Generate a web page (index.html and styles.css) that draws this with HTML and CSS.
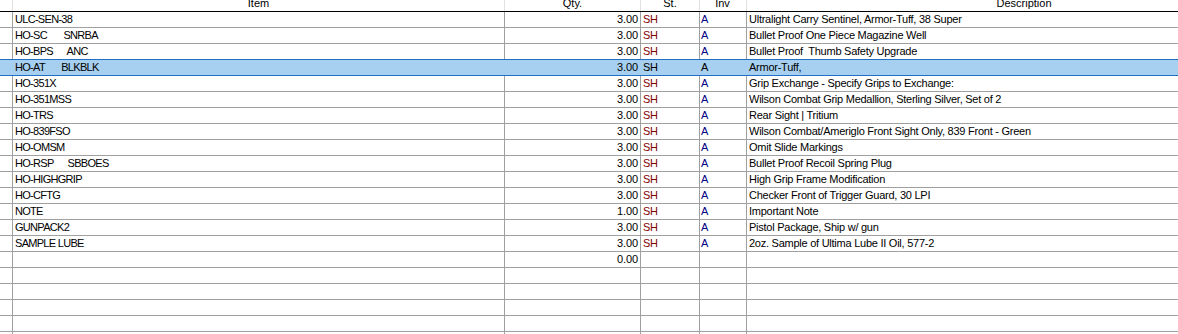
FILE: index.html
```html
<!DOCTYPE html>
<html>
<head>
<meta charset="utf-8">
<link rel="stylesheet" href="styles.css">
</head>
<body>
<div class="grid">
  <div class="row head"><div class="c c0"></div><div class="c c1">Item</div><div class="c c2">Qty.</div><div class="c c3">St.</div><div class="c c4">Inv</div><div class="c c5">Description</div></div>
  <div class="row"><div class="c c0"></div><div class="c c1">ULC-SEN-38</div><div class="c c2">3.00</div><div class="c c3 st">SH</div><div class="c c4 inv">A</div><div class="c c5">Ultralight Carry Sentinel, Armor-Tuff, 38 Super</div></div>
  <div class="row"><div class="c c0"></div><div class="c c1">HO-SC       SNRBA</div><div class="c c2">3.00</div><div class="c c3 st">SH</div><div class="c c4 inv">A</div><div class="c c5">Bullet Proof One Piece Magazine Well</div></div>
  <div class="row presel"><div class="c c0"></div><div class="c c1">HO-BPS      ANC</div><div class="c c2">3.00</div><div class="c c3 st">SH</div><div class="c c4 inv">A</div><div class="c c5">Bullet Proof  Thumb Safety Upgrade</div></div>
  <div class="row sel"><div class="c c0"></div><div class="c c1">HO-AT       BLKBLK</div><div class="c c2">3.00</div><div class="c c3 st">SH</div><div class="c c4 inv">A</div><div class="c c5">Armor-Tuff,</div></div>
  <div class="row"><div class="c c0"></div><div class="c c1">HO-351X</div><div class="c c2">3.00</div><div class="c c3 st">SH</div><div class="c c4 inv">A</div><div class="c c5">Grip Exchange - Specify Grips to Exchange:</div></div>
  <div class="row"><div class="c c0"></div><div class="c c1">HO-351MSS</div><div class="c c2">3.00</div><div class="c c3 st">SH</div><div class="c c4 inv">A</div><div class="c c5">Wilson Combat Grip Medallion, Sterling Silver, Set of 2</div></div>
  <div class="row"><div class="c c0"></div><div class="c c1">HO-TRS</div><div class="c c2">3.00</div><div class="c c3 st">SH</div><div class="c c4 inv">A</div><div class="c c5">Rear Sight | Tritium</div></div>
  <div class="row"><div class="c c0"></div><div class="c c1">HO-839FSO</div><div class="c c2">3.00</div><div class="c c3 st">SH</div><div class="c c4 inv">A</div><div class="c c5">Wilson Combat/Ameriglo Front Sight Only, 839 Front - Green</div></div>
  <div class="row"><div class="c c0"></div><div class="c c1">HO-OMSM</div><div class="c c2">3.00</div><div class="c c3 st">SH</div><div class="c c4 inv">A</div><div class="c c5">Omit Slide Markings</div></div>
  <div class="row"><div class="c c0"></div><div class="c c1">HO-RSP      SBBOES</div><div class="c c2">3.00</div><div class="c c3 st">SH</div><div class="c c4 inv">A</div><div class="c c5">Bullet Proof Recoil Spring Plug</div></div>
  <div class="row"><div class="c c0"></div><div class="c c1">HO-HIGHGRIP</div><div class="c c2">3.00</div><div class="c c3 st">SH</div><div class="c c4 inv">A</div><div class="c c5">High Grip Frame Modification</div></div>
  <div class="row"><div class="c c0"></div><div class="c c1">HO-CFTG</div><div class="c c2">3.00</div><div class="c c3 st">SH</div><div class="c c4 inv">A</div><div class="c c5">Checker Front of Trigger Guard, 30 LPI</div></div>
  <div class="row"><div class="c c0"></div><div class="c c1">NOTE</div><div class="c c2">1.00</div><div class="c c3 st">SH</div><div class="c c4 inv">A</div><div class="c c5">Important Note</div></div>
  <div class="row"><div class="c c0"></div><div class="c c1">GUNPACK2</div><div class="c c2">3.00</div><div class="c c3 st">SH</div><div class="c c4 inv">A</div><div class="c c5">Pistol Package, Ship w/ gun</div></div>
  <div class="row"><div class="c c0"></div><div class="c c1">SAMPLE LUBE</div><div class="c c2">3.00</div><div class="c c3 st">SH</div><div class="c c4 inv">A</div><div class="c c5">2oz. Sample of Ultima Lube II Oil, 577-2</div></div>
  <div class="row"><div class="c c0"></div><div class="c c1"></div><div class="c c2">0.00</div><div class="c c3"></div><div class="c c4"></div><div class="c c5"></div></div>
  <div class="row"><div class="c c0"></div><div class="c c1"></div><div class="c c2"></div><div class="c c3"></div><div class="c c4"></div><div class="c c5"></div></div>
  <div class="row"><div class="c c0"></div><div class="c c1"></div><div class="c c2"></div><div class="c c3"></div><div class="c c4"></div><div class="c c5"></div></div>
  <div class="row"><div class="c c0"></div><div class="c c1"></div><div class="c c2"></div><div class="c c3"></div><div class="c c4"></div><div class="c c5"></div></div>
  <div class="row"><div class="c c0"></div><div class="c c1"></div><div class="c c2"></div><div class="c c3"></div><div class="c c4"></div><div class="c c5"></div></div>
  <div class="row"><div class="c c0"></div><div class="c c1"></div><div class="c c2"></div><div class="c c3"></div><div class="c c4"></div><div class="c c5"></div></div>
</div>
</body>
</html>
```

FILE: styles.css
```css
html, body {
  margin: 0;
  padding: 0;
  background: #ffffff;
  overflow: hidden;
}
body {
  font-family: "Liberation Sans", Arial, sans-serif;
  font-size: 11px;
  color: #000000;
}
.grid {
  width: 1178px;
  height: 334px;
  overflow: hidden;
}
.row {
  display: grid;
  grid-template-columns: 13px 492px 136px 59px 47px 555px;
  width: 1302px;
  height: 16px;
  box-sizing: border-box;
  border-bottom: 1px solid #a0a0a0;
}
.c {
  box-sizing: border-box;
  border-right: 1px solid #a0a0a0;
  padding: 0 2px;
  line-height: 15px;
  white-space: pre;
  overflow: hidden;
  letter-spacing: -0.25px;
}
.c1 {
  letter-spacing: -0.7px;
}
.c2 {
  text-align: right;
  letter-spacing: -0.1px;
}
.c3 {
  letter-spacing: -0.4px;
}
.c4 {
  padding-left: 1px;
}
.st {
  color: #800000;
}
.inv {
  color: #000080;
}
.head {
  height: 12px;
  border-bottom-color: #000000;
}
.head .c {
  border-right-color: #e2e2e2;
  text-align: center;
  line-height: 7px;
  letter-spacing: 0;
}
.presel {
  border-bottom-color: #1f6fc5;
}
.sel {
  background: #a6cff0;
  border-bottom-color: #1f6fc5;
}
.sel .c {
  border-right-color: transparent;
}
.sel .st,
.sel .inv {
  color: #000000;
}
```
